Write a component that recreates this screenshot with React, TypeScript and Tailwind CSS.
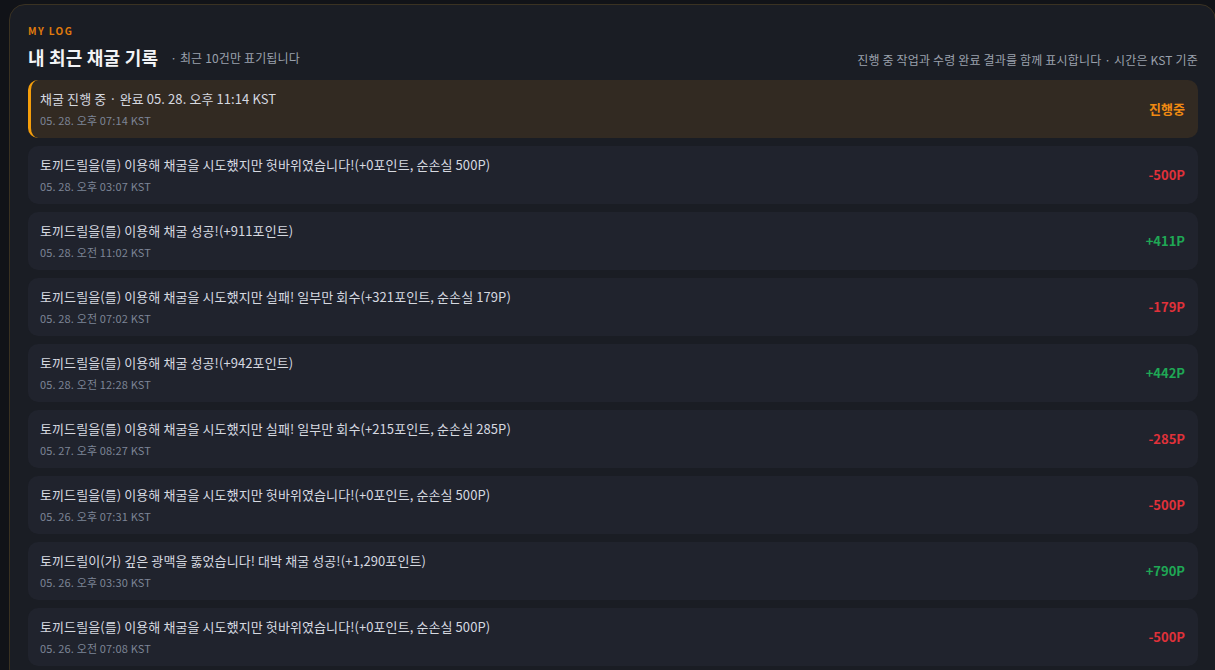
import React from "react";

type LogRow = {
  text: string;
  time: string;
  value: string;
  tone: "pending" | "loss" | "gain";
};

const rows: LogRow[] = [
  { text: "채굴 진행 중 · 완료 05. 28. 오후 11:14 KST", time: "05. 28. 오후 07:14 KST", value: "진행중", tone: "pending" },
  { text: "토끼드릴을(를) 이용해 채굴을 시도했지만 헛바위였습니다!(+0포인트, 순손실 500P)", time: "05. 28. 오후 03:07 KST", value: "-500P", tone: "loss" },
  { text: "토끼드릴을(를) 이용해 채굴 성공!(+911포인트)", time: "05. 28. 오전 11:02 KST", value: "+411P", tone: "gain" },
  { text: "토끼드릴을(를) 이용해 채굴을 시도했지만 실패! 일부만 회수(+321포인트, 순손실 179P)", time: "05. 28. 오전 07:02 KST", value: "-179P", tone: "loss" },
  { text: "토끼드릴을(를) 이용해 채굴 성공!(+942포인트)", time: "05. 28. 오전 12:28 KST", value: "+442P", tone: "gain" },
  { text: "토끼드릴을(를) 이용해 채굴을 시도했지만 실패! 일부만 회수(+215포인트, 순손실 285P)", time: "05. 27. 오후 08:27 KST", value: "-285P", tone: "loss" },
  { text: "토끼드릴을(를) 이용해 채굴을 시도했지만 헛바위였습니다!(+0포인트, 순손실 500P)", time: "05. 26. 오후 07:31 KST", value: "-500P", tone: "loss" },
  { text: "토끼드릴이(가) 깊은 광맥을 뚫었습니다! 대박 채굴 성공!(+1,290포인트)", time: "05. 26. 오후 03:30 KST", value: "+790P", tone: "gain" },
  { text: "토끼드릴을(를) 이용해 채굴을 시도했지만 헛바위였습니다!(+0포인트, 순손실 500P)", time: "05. 26. 오전 07:08 KST", value: "-500P", tone: "loss" },
];

const font = { fontFamily: '"Noto Sans CJK KR", "Noto Sans", sans-serif' };

function Row({ row }: { row: LogRow }) {
  const pending = row.tone === "pending";
  return (
    <div
      className={
        pending
          ? "flex items-center justify-between rounded-[10px] border-l-[3px] border-[#f59e0b] bg-[#322a22] py-[10px] pl-[9px] pr-[13px]"
          : "flex items-center justify-between rounded-[10px] bg-[#20232d] py-[10px] pl-[12px] pr-[13px]"
      }
    >
      <div className="flex min-w-0 flex-col">
        <div className="text-[13px] leading-[18px] tracking-[0.09px] text-[#d6d9e0]">{row.text}</div>
        <div className="mt-[5px] text-[11px] leading-[15px] tracking-[0.15px] text-[#7d8596]">{row.time}</div>
      </div>
      <div
        className={
          row.tone === "pending"
            ? "text-[13px] font-bold text-[#f08a12]"
            : row.tone === "loss"
            ? "text-[13px] font-bold text-[#e0313a]"
            : "text-[13px] font-bold text-[#1fa855]"
        }
      >
        {row.value}
      </div>
    </div>
  );
}

export default function App() {
  return (
    <div className="h-[670px] w-[1215px] overflow-hidden bg-[#111318] pl-[9px] pt-[4px]" style={font}>
      <div className="w-[1207px] rounded-[16px] border border-[#3a3222] bg-[#1a1d24] pb-[18px] pl-[18px] pr-[17px] pt-[18px]">
        <div className="text-[10px] font-bold leading-[16px] tracking-[0.14em] text-[#e07b0c]">MY LOG</div>
        <div className="mt-[5px] flex items-end justify-between">
          <div className="flex items-end">
            <h1 className="text-[18px] font-bold leading-[26px] tracking-[0.2px] text-[#f3f4f6]">내 최근 채굴 기록</h1>
            <span className="mb-[4px] ml-[12px] text-[12px] leading-[16px] tracking-[0.15px] text-[#9aa1ad]">· 최근 10건만 표기됩니다</span>
          </div>
          <span className="mb-[2px] text-[12px] leading-[16px] tracking-[0.17px] text-[#9aa1ad]">
            진행 중 작업과 수령 완료 결과를 함께 표시합니다 · 시간은 KST 기준
          </span>
        </div>
        <div className="mt-[10px] flex flex-col gap-[8px]">
          {rows.map((r, i) => (
            <Row key={i} row={r} />
          ))}
        </div>
      </div>
    </div>
  );
}
